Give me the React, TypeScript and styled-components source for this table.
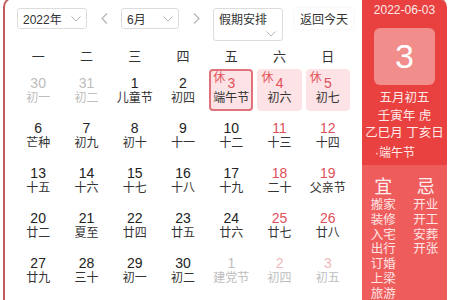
import React from "react";
import styled, { createGlobalStyle } from "styled-components";

const FONT = `"Liberation Sans", "Noto Sans CJK SC", sans-serif`;

const Global = createGlobalStyle`
  html, body { margin: 0; padding: 0; background: #fff; overflow: hidden; }
  body { font-family: ${FONT}; }
`;

const Frame = styled.div`
  display: flex;
  box-sizing: border-box;
  width: 444px;
  height: 308px;
  margin: -3px 0 0 3px;
  border: 2px solid #c25b5b;
  border-right: none;
  border-radius: 10px 10px 0 0;
  overflow: hidden;
  background: #fff;
`;

const Main = styled.div`
  width: 357px;
  flex: none;
  padding-top: 9px;
`;

const Toolbar = styled.div`
  display: flex;
  align-items: flex-start;
  padding-left: 12px;
  height: 33px;
`;

const Select = styled.div<{ $w: number }>`
  box-sizing: border-box;
  width: ${(p) => p.$w}px;
  height: 21px;
  border: 1px solid #dcdcdc;
  border-radius: 3px;
  padding: 0 5px;
  display: flex;
  align-items: center;
  justify-content: space-between;
  font-size: 12px;
  color: #333;
`;

const TallSelect = styled.div`
  box-sizing: border-box;
  width: 70px;
  height: 33px;
  border: 1px solid #dcdcdc;
  border-radius: 3px;
  padding: 3px 5px 0 5px;
  display: flex;
  flex-direction: column;
  font-size: 12px;
  line-height: 16px;
  color: #333;
`;

const ChevRow = styled.div`
  display: flex;
  justify-content: flex-end;
  padding-right: 1px;
  margin-top: 3px;
`;

const ArrowBtn = styled.div`
  width: 34px;
  height: 21px;
  display: flex;
  align-items: center;
  justify-content: center;
`;

const TodayBtn = styled.div`
  margin-left: 12px;
  height: 21px;
  padding: 0 5px;
  display: flex;
  align-items: center;
  font-size: 12px;
  color: #333;
  border-radius: 3px;
  box-shadow: 0 0 4px rgba(0, 0, 0, 0.06);
`;

const Weekdays = styled.div`
  display: grid;
  grid-template-columns: repeat(7, 1fr);
  column-gap: 4px;
  width: 334px;
  margin: 3px 0 0 11px;
  height: 22px;
  align-items: center;
  text-align: center;
  font-size: 13px;
  color: #333;
`;

const Days = styled.div`
  display: grid;
  grid-template-columns: repeat(7, 1fr);
  grid-auto-rows: 42px;
  column-gap: 4px;
  row-gap: 3px;
  width: 334px;
  margin: 3px 0 0 11px;
`;

const Cell = styled.div<{ $rest?: boolean; $sel?: boolean }>`
  position: relative;
  box-sizing: border-box;
  border: 2px solid ${(p) => (p.$sel ? "#e0727b" : "transparent")};
  border-radius: 4px;
  background: ${(p) => (p.$rest ? "#fde3e5" : "transparent")};
  display: flex;
  flex-direction: column;
  align-items: center;
  padding-top: 4px;
`;

const Num = styled.div<{ $tone: string }>`
  font-size: 14px;
  line-height: 16px;
  color: ${(p) => p.$tone};
`;

const Lunar = styled.div<{ $tone: string }>`
  font-size: 12px;
  line-height: 14px;
  color: ${(p) => p.$tone};
  white-space: nowrap;
`;

const RestTag = styled.span`
  position: absolute;
  top: 1px;
  left: 2px;
  font-size: 12px;
  line-height: 13px;
  color: #e5535b;
`;

const Panel = styled.div`
  width: 85px;
  flex: none;
  display: flex;
  flex-direction: column;
  background: #e8413f;
  border-top-right-radius: 8px;
  color: #fff;
`;

const PanelTop = styled.div`
  height: 166px;
  flex: none;
  padding-top: 3px;
  box-sizing: border-box;
  display: flex;
  flex-direction: column;
`;

const DateLine = styled.div`
  text-align: center;
  font-size: 12px;
  line-height: 16px;
  color: #fde9e9;
`;

const BigDay = styled.div`
  width: 61px;
  height: 57px;
  margin: 10px auto 0;
  border-radius: 6px;
  background: rgba(255, 255, 255, 0.4);
  display: flex;
  align-items: center;
  justify-content: center;
  font-size: 34px;
  color: #fff;
`;

const Info = styled.div`
  margin-top: 5px;
  text-align: center;
  font-size: 12.5px;
  line-height: 17.5px;
  color: #ffe8e8;
  white-space: nowrap;
`;

const Festival = styled.div`
  margin-top: 2px;
  padding-left: 13px;
  font-size: 12px;
  line-height: 17px;
  color: #ffe8e8;
`;

const PanelBottom = styled.div`
  flex: 1;
  background: #ee5c5c;
  display: grid;
  grid-template-columns: 1fr 1fr;
  padding-top: 11px;
  align-items: start;
`;

const Col = styled.div`
  display: flex;
  flex-direction: column;
  align-items: center;
`;

const ColHead = styled.div`
  font-size: 18px;
  line-height: 22px;
  color: #fff0f0;
`;

const Item = styled.div`
  font-size: 12.5px;
  line-height: 14.8px;
  color: #ffe4e4;
`;

const Chevron = () => (
  <svg width="10" height="6" viewBox="0 0 10 6">
    <path d="M0.5 0.5 L5 5 L9.5 0.5" fill="none" stroke="#b4b4b4" strokeWidth="1" />
  </svg>
);

const Arrow = ({ dir }: { dir: "l" | "r" }) => (
  <svg width="7" height="11" viewBox="0 0 7 11">
    <path
      d={dir === "l" ? "M6 0.5 L1 5.5 L6 10.5" : "M1 0.5 L6 5.5 L1 10.5"}
      fill="none"
      stroke="#b4b4b4"
      strokeWidth="1.2"
    />
  </svg>
);

type Day = { n: number; l: string; other?: boolean; rest?: boolean; sel?: boolean };

const weeks: Day[][] = [
  [
    { n: 30, l: "初一", other: true },
    { n: 31, l: "初二", other: true },
    { n: 1, l: "儿童节" },
    { n: 2, l: "初四" },
    { n: 3, l: "端午节", rest: true, sel: true },
    { n: 4, l: "初六", rest: true },
    { n: 5, l: "初七", rest: true },
  ],
  [
    { n: 6, l: "芒种" },
    { n: 7, l: "初九" },
    { n: 8, l: "初十" },
    { n: 9, l: "十一" },
    { n: 10, l: "十二" },
    { n: 11, l: "十三" },
    { n: 12, l: "十四" },
  ],
  [
    { n: 13, l: "十五" },
    { n: 14, l: "十六" },
    { n: 15, l: "十七" },
    { n: 16, l: "十八" },
    { n: 17, l: "十九" },
    { n: 18, l: "二十" },
    { n: 19, l: "父亲节" },
  ],
  [
    { n: 20, l: "廿二" },
    { n: 21, l: "夏至" },
    { n: 22, l: "廿四" },
    { n: 23, l: "廿五" },
    { n: 24, l: "廿六" },
    { n: 25, l: "廿七" },
    { n: 26, l: "廿八" },
  ],
  [
    { n: 27, l: "廿九" },
    { n: 28, l: "三十" },
    { n: 29, l: "初一" },
    { n: 30, l: "初二" },
    { n: 1, l: "建党节", other: true },
    { n: 2, l: "初四", other: true },
    { n: 3, l: "初五", other: true },
  ],
];

const weekdayNames = ["一", "二", "三", "四", "五", "六", "日"];
const good = ["搬家", "装修", "入宅", "出行", "订婚", "上梁", "旅游"];
const bad = ["开业", "开工", "安葬", "开张"];

function numTone(d: Day, col: number) {
  const weekend = col >= 5 || d.rest;
  if (d.other) return weekend ? "#f1b9bd" : "#bdbdbd";
  return weekend ? "#e0505a" : "#222";
}

export default function App() {
  return (
    <>
      <Global />
      <Frame>
        <Main>
          <Toolbar>
            <Select $w={70}>
              <span>2022年</span>
              <Chevron />
            </Select>
            <ArrowBtn>
              <Arrow dir="l" />
            </ArrowBtn>
            <Select $w={58}>
              <span>6月</span>
              <Chevron />
            </Select>
            <ArrowBtn>
              <Arrow dir="r" />
            </ArrowBtn>
            <TallSelect>
              <span>假期安排</span>
              <ChevRow>
                <Chevron />
              </ChevRow>
            </TallSelect>
            <TodayBtn>返回今天</TodayBtn>
          </Toolbar>
          <Weekdays>
            {weekdayNames.map((w) => (
              <div key={w}>{w}</div>
            ))}
          </Weekdays>
          <Days>
            {weeks.flatMap((wk, wi) =>
              wk.map((d, ci) => (
                <Cell key={`${wi}-${ci}`} $rest={d.rest} $sel={d.sel}>
                  {d.rest && <RestTag>休</RestTag>}
                  <Num $tone={numTone(d, ci)}>{d.n}</Num>
                  <Lunar $tone={d.other ? "#bdbdbd" : "#333"}>{d.l}</Lunar>
                </Cell>
              ))
            )}
          </Days>
        </Main>
        <Panel>
          <PanelTop>
            <DateLine>2022-06-03</DateLine>
            <BigDay>3</BigDay>
            <Info>
              五月初五
              <br />
              壬寅年 虎
              <br />
              乙巳月 丁亥日
            </Info>
            <Festival>·端午节</Festival>
          </PanelTop>
          <PanelBottom>
            <Col>
              <ColHead>宜</ColHead>
              {good.map((g) => (
                <Item key={g}>{g}</Item>
              ))}
            </Col>
            <Col>
              <ColHead>忌</ColHead>
              {bad.map((g) => (
                <Item key={g}>{g}</Item>
              ))}
            </Col>
          </PanelBottom>
        </Panel>
      </Frame>
    </>
  );
}
